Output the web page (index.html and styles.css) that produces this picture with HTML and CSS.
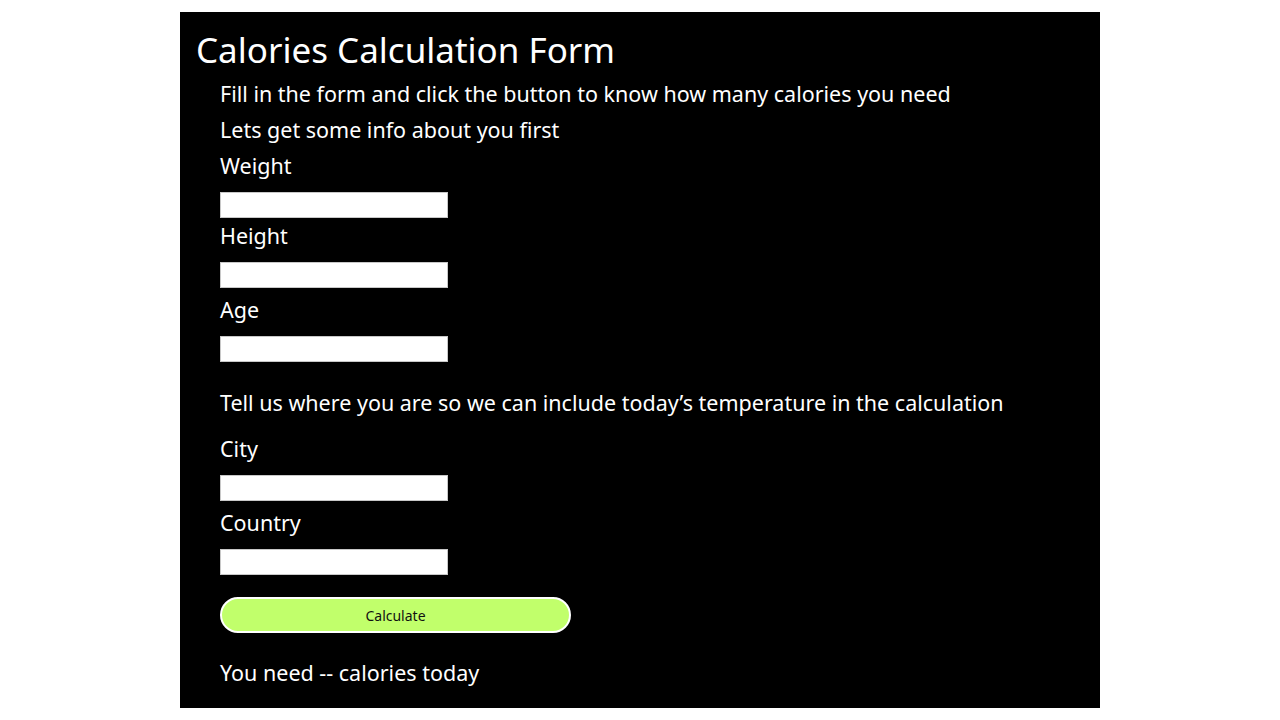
FILE: index.html
```html
<!DOCTYPE html>
<html lang="en">
<head>
<meta charset="utf-8">
<title>Calories Calculation Form</title>
<link rel="stylesheet" href="styles.css">
</head>
<body>
<main class="panel">
  <h1 class="title">Calories Calculation Form</h1>
  <div class="content">
    <p class="text">Fill in the form and click the button to know how many calories you need</p>
    <p class="text">Lets get some info about you first</p>
    <div class="field">
      <label class="label" for="weight">Weight</label>
      <input class="input" id="weight" type="text">
    </div>
    <div class="field field-tight">
      <label class="label" for="height">Height</label>
      <input class="input" id="height" type="text">
    </div>
    <div class="field field-loose">
      <label class="label" for="age">Age</label>
      <input class="input" id="age" type="text">
    </div>
    <p class="text section">Tell us where you are so we can include today’s temperature in the calculation</p>
    <div class="field field-city">
      <label class="label" for="city">City</label>
      <input class="input" id="city" type="text">
    </div>
    <div class="field field-loose">
      <label class="label" for="country">Country</label>
      <input class="input" id="country" type="text">
    </div>
    <button class="button" type="button">Calculate</button>
    <p class="text result">You need -- calories today</p>
  </div>
</main>
</body>
</html>
```
FILE: styles.css
```css
* { box-sizing: border-box; }
html, body { margin: 0; padding: 0; background: #ffffff; }
body { font-family: "Noto Sans", "Open Sans", sans-serif; color: #ffffff; }
.panel {
  width: 920px;
  height: 696px;
  margin: 12px 0 0 180px;
  background: #000000;
  padding: 16px 0 0 16px;
  overflow: hidden;
}
.title {
  margin: 0;
  font-size: 35px;
  font-weight: 400;
  line-height: 44px;
}
.content {
  padding: 4px 0 0 24px;
  display: flex;
  flex-direction: column;
  align-items: flex-start;
}
.text {
  margin: 0;
  font-size: 21.5px;
  line-height: 36px;
}
.label {
  display: block;
  font-size: 21.5px;
  line-height: 36px;
}
.field { display: flex; flex-direction: column; align-items: flex-start; }
.field-tight { margin-top: 0; }
.field-loose { margin-top: 4px; }
.field-city { margin-top: 10px; }
.input {
  margin-top: 8px;
  width: 228px;
  height: 26px;
  border: 1px solid #c8c8c8;
  background: #ffffff;
  padding: 0 4px;
}
.section { margin-top: 23px; }
.button {
  margin-top: 22px;
  width: 351px;
  height: 36px;
  border: 2px solid #ffffff;
  border-radius: 18px;
  background: #c1ff6b;
  color: #111111;
  font-family: "Noto Sans", "Open Sans", sans-serif;
  font-size: 14px;
}
.result { margin-top: 22px; }
```
